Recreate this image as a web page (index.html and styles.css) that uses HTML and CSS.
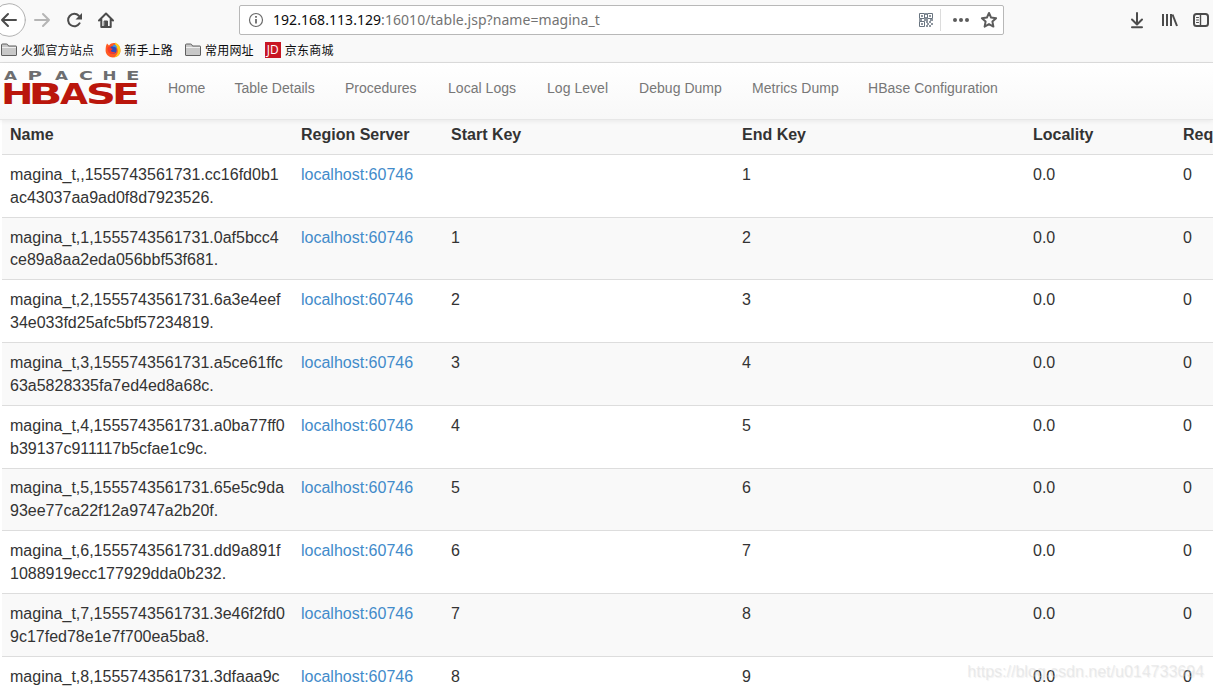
FILE: index.html
```html
<!DOCTYPE html>
<html lang="zh-CN">
<head>
  <meta charset="utf-8">
  <title>Table: magina_t</title>
  <link rel="stylesheet" href="styles.css">
</head>
<body>
  <div class="browser">
    <div class="toolbar">
      <div class="nav-buttons">
        <svg width="120" height="40" viewBox="0 0 120 40" fill="none" stroke="#4c4c4c" stroke-width="2" stroke-linecap="round" stroke-linejoin="round">
          <circle cx="9" cy="20" r="16.3" fill="#fff" stroke="#b1b1b1" stroke-width="1"/>
          <path d="M16 20H2M8 14l-6 6 6 6"/>
          <path d="M35 20h14M43 14l6 6-6 6" stroke="#b5b5b5"/>
          <path d="M79.6 23.3a6.2 6.2 0 1 1-.8-7.5"/>
          <path d="M82 13v6.5h-6.5z" fill="#4c4c4c" stroke="none"/>
          <path d="M99 20.5l7-7 7 7M101.3 19.5v7.5h9.4v-7.5"/>
          <path d="M104.5 21h3v5h-3z" fill="#4c4c4c" stroke-width="1"/>
        </svg>
      </div>
      <div class="urlbar">
        <svg class="info" width="16" height="16" viewBox="0 0 16 16" fill="none" stroke="#6b6b6b">
          <circle cx="8" cy="8" r="6.5" stroke-width="1.2"/>
          <path d="M8 7v4.5M8 4v1.8" stroke-width="1.8"/>
        </svg>
        <div class="url"><span class="host">192.168.113.129</span>:16010/table.jsp?name=magina_t</div>
        <svg class="qr" width="14" height="14" viewBox="0 0 14 14" fill="none" stroke="#68737f">
          <path d="M.5.5h5v5h-5zM8.500.5h5v5h-5zM.5 8.500h5v5h-5z"/>
          <path d="M2 3h2M10 3h2M2 11h2M7 0v2M7 4v2M0 7h3M5 7h4M11 7h3M7 9h2M10 9h2M8 11h2M12 11h2M7 13h2M10 13h2" stroke-width="1.600"/>
        </svg>
        <span class="divider"></span>
        <svg class="dots" width="18" height="6" viewBox="0 0 18 6" fill="#5c5c5c">
          <circle cx="3" cy="3" r="2"/><circle cx="9" cy="3" r="2"/><circle cx="15" cy="3" r="2"/>
        </svg>
        <svg class="star" width="18" height="18" viewBox="0 0 18 18" fill="none" stroke="#5c5c5c" stroke-width="2" stroke-linejoin="round">
          <path d="M9 2l2.100 4.600 5 .6-3.700 3.400 1 5L9 13.100l-4.400 2.500 1-5L1.900 7.200l5-.6z"/>
        </svg>
      </div>
      <div class="tools">
        <svg width="84" height="20" viewBox="0 0 84 20" fill="none" stroke="#4c4c4c" stroke-width="2" stroke-linecap="round" stroke-linejoin="round">
          <path d="M8 3v11M3 9.500l5 5 5-5M3 17.300h10"/>
          <path d="M34 4v12M38 4v12M42 4v12" stroke-linecap="butt"/>
          <path d="M43.500 4.500L48 16" stroke-linecap="butt"/>
          <rect x="65" y="4" width="14" height="12" rx="2.500"/>
          <path d="M71.500 4v12" stroke-width="1.4"/>
          <path d="M67.500 7.500h2M67.500 10h2M67.500 12.500h2" stroke-width="1"/>
        </svg>
      </div>
    </div>
    <div class="bookmarks">
      <div class="bookmark">
        <svg width="18" height="16" viewBox="0 0 18 16" fill="#c8c8c8" stroke="#606060"><path d="M1.500 13V3q0-1 1-1h4q1 0 1.500 1l.5 1H16q.5 0 .5.500V13q0 .5-.5.500H2q-.5 0-.5-.5z"/><path d="M2 5.500h14" stroke="#eee"/></svg>
        <span>火狐官方站点</span>
      </div>
      <div class="bookmark">
        <svg width="16" height="16" viewBox="0 0 16 16">
          <path d="M1 4l1-2.500L4 3.500C6 1 9 .5 10.500 1.500c3 1 5 4 4.900 7.300C15.300 13 12 15.500 8 15.500S.6 12.500.6 8.500C.6 7 .7 5.500 1 4z" fill="#ff5a22"/>
          <path d="M10 .5c4 1.500 5.600 4.500 5.500 8 0 4-3 6.500-6.500 7 3-2 4.500-5 3.500-8.500-.4-2-2.500-3-2.500-6.500z" fill="#ffc81a"/>
          <circle cx="7.800" cy="8" r="3.800" fill="#2f4bbd"/>
          <path d="M9 2.500c2 .5 3 2 3 4-1-1.200-2.500-2-4.500-2z" fill="#2a9df0"/>
          <path d="M2.500 6c1-1.500 2.500-2 3.500-1.800L5.500 6l2.300 1-2 1.400c.7 1.600 2.800 2 4.700 1-.8 2-3 3-5 2.300C3.500 11 2.300 8.500 2.500 6z" fill="#f83a2a"/>
        </svg>
        <span>新手上路</span>
      </div>
      <div class="bookmark">
        <svg width="18" height="16" viewBox="0 0 18 16" fill="#c8c8c8" stroke="#606060"><path d="M1.500 13V3q0-1 1-1h4q1 0 1.500 1l.5 1H16q.5 0 .5.500V13q0 .5-.5.500H2q-.5 0-.5-.5z"/><path d="M2 5.500h14" stroke="#eee"/></svg>
        <span>常用网址</span>
      </div>
      <div class="bookmark">
        <span class="jd">JD</span>
        <span>京东商城</span>
      </div>
    </div>
  </div>

  <div class="navbar">
    <svg class="logo" width="140" height="44" viewBox="0 -6 140 44">
      <g class="logo-small">
        <text x="0" y="11" textLength="13" lengthAdjust="spacingAndGlyphs">A</text>
        <text x="23.500" y="11" textLength="14.500" lengthAdjust="spacingAndGlyphs">P</text>
        <text x="51" y="11" textLength="13" lengthAdjust="spacingAndGlyphs">A</text>
        <text x="75" y="11" textLength="14" lengthAdjust="spacingAndGlyphs">C</text>
        <text x="98.500" y="11" textLength="14" lengthAdjust="spacingAndGlyphs">H</text>
        <text x="122" y="11" textLength="13.500" lengthAdjust="spacingAndGlyphs">E</text>
      </g>
      <g class="logo-big">
        <text x="-3" y="35" textLength="32.500" lengthAdjust="spacingAndGlyphs">H</text>
        <text x="24.500" y="35" textLength="34" lengthAdjust="spacingAndGlyphs">B</text>
        <text x="56" y="35" textLength="28" lengthAdjust="spacingAndGlyphs">A</text>
        <text x="82" y="35" textLength="30" lengthAdjust="spacingAndGlyphs">S</text>
        <text x="108" y="35" textLength="28" lengthAdjust="spacingAndGlyphs">E</text>
      </g>
    </svg>
    <ul class="menu">
      <li><a href="#">Home</a></li>
      <li><a href="#">Table Details</a></li>
      <li><a href="#">Procedures</a></li>
      <li><a href="#">Local Logs</a></li>
      <li><a href="#">Log Level</a></li>
      <li><a href="#">Debug Dump</a></li>
      <li><a href="#">Metrics Dump</a></li>
      <li><a href="#">HBase Configuration</a></li>
    </ul>
  </div>

  <div class="content">
    <div class="row head">
      <div>Name</div><div>Region Server</div><div>Start Key</div><div>End Key</div><div>Locality</div><div>Requests</div>
    </div>
    <div class="row">
      <div>magina_t,,1555743561731.cc16fd0b1<br>ac43037aa9ad0f8d7923526.</div><div><a href="#">localhost:60746</a></div><div></div><div>1</div><div>0.0</div><div>0</div>
    </div>
    <div class="row">
      <div>magina_t,1,1555743561731.0af5bcc4<br>ce89a8aa2eda056bbf53f681.</div><div><a href="#">localhost:60746</a></div><div>1</div><div>2</div><div>0.0</div><div>0</div>
    </div>
    <div class="row">
      <div>magina_t,2,1555743561731.6a3e4eef<br>34e033fd25afc5bf57234819.</div><div><a href="#">localhost:60746</a></div><div>2</div><div>3</div><div>0.0</div><div>0</div>
    </div>
    <div class="row">
      <div>magina_t,3,1555743561731.a5ce61ffc<br>63a5828335fa7ed4ed8a68c.</div><div><a href="#">localhost:60746</a></div><div>3</div><div>4</div><div>0.0</div><div>0</div>
    </div>
    <div class="row">
      <div>magina_t,4,1555743561731.a0ba77ff0<br>b39137c911117b5cfae1c9c.</div><div><a href="#">localhost:60746</a></div><div>4</div><div>5</div><div>0.0</div><div>0</div>
    </div>
    <div class="row">
      <div>magina_t,5,1555743561731.65e5c9da<br>93ee77ca22f12a9747a2b20f.</div><div><a href="#">localhost:60746</a></div><div>5</div><div>6</div><div>0.0</div><div>0</div>
    </div>
    <div class="row">
      <div>magina_t,6,1555743561731.dd9a891f<br>1088919ecc177929dda0b232.</div><div><a href="#">localhost:60746</a></div><div>6</div><div>7</div><div>0.0</div><div>0</div>
    </div>
    <div class="row">
      <div>magina_t,7,1555743561731.3e46f2fd0<br>9c17fed78e1e7f700ea5ba8.</div><div><a href="#">localhost:60746</a></div><div>7</div><div>8</div><div>0.0</div><div>0</div>
    </div>
    <div class="row">
      <div>magina_t,8,1555743561731.3dfaaa9c</div><div><a href="#">localhost:60746</a></div><div>8</div><div>9</div><div>0.0</div><div>0</div>
    </div>
  </div>
  <div class="watermark">https://blog.csdn.net/u014733694</div>
</body>
</html>
```

FILE: styles.css
```css
* {
  box-sizing: border-box;
}

body {
  margin: 0;
  width: 1213px;
  height: 690px;
  overflow: hidden;
  position: relative;
  background: #fff;
  color: #333;
  font-family: "Liberation Sans", Arial, sans-serif;
  font-size: 16px;
  line-height: 22.857px;
}

svg {
  display: block;
  flex: none;
}

a {
  color: #428bca;
  text-decoration: none;
}

/* browser chrome */
.browser {
  height: 63px;
  background: #f9f9f9;
  border-bottom: 1px solid #dedede;
}

.toolbar {
  display: flex;
  align-items: center;
  height: 40px;
}

.nav-buttons {
  width: 239px;
}

.urlbar {
  display: flex;
  align-items: center;
  width: 765px;
  height: 30px;
  padding: 0 5px 0 8px;
  border: 1px solid #b8b8b8;
  border-radius: 2px;
  background: #fff;
}

.url {
  flex: 1;
  margin-left: 9px;
  color: #737373;
  font-family: "Noto Sans", sans-serif;
  font-size: 14px;
  letter-spacing: 0.05px;
  white-space: nowrap;
}

.host {
  color: #0c0c0d;
}

.divider {
  width: 1px;
  height: 22px;
  margin: 0 11px 0 7px;
  background: #dcdcdc;
}

.star {
  margin-left: 10px;
}

.tools {
  margin-left: 125px;
}

.bookmarks {
  display: flex;
  height: 20px;
  align-items: center;
  color: #0c0c0d;
  font-family: "Noto Sans CJK SC", sans-serif;
  font-size: 12px;
  letter-spacing: 0.2px;
  line-height: 20px;
}

.bookmark {
  display: flex;
  align-items: center;
  gap: 3px;
  margin-right: 11px;
}

.jd {
  width: 16px;
  height: 16px;
  margin-right: 1px;
  background: #c81623;
  color: #fff;
  font-family: "Open Sans", sans-serif;
  font-size: 12px;
  line-height: 16px;
  text-align: center;
}

/* hbase navbar */
.navbar {
  display: flex;
  position: relative;
  height: 57px;
  padding-left: 4px;
  background: linear-gradient(#fff, #f8f8f8);
  border-bottom: 1px solid #e7e7e7;
  box-shadow: 0 1px 5px rgba(0, 0, 0, 0.075);
}

.logo {
  overflow: visible;
}

.logo-small {
  fill: #6d6e70;
  font: bold 12.5px "DejaVu Sans", sans-serif;
}

.logo-big {
  fill: #ba160c;
  font: bold 28.8px "DejaVu Sans", sans-serif;
}

.menu {
  display: grid;
  grid-template-columns: 66.5px 110.5px 103px 99px 92px 113px 116px 170px;
  margin: 0 0 0 9px;
  padding: 0;
  list-style: none;
  font-size: 14px;
  line-height: 20px;
}

.menu a {
  display: block;
  padding: 15px 0 15px 15px;
  color: #777;
}

.menu li:nth-child(n+4) a {
  letter-spacing: 0.04px;
}

/* regions table */
.content {
  margin-left: 2px;
  overflow: hidden;
}

.row {
  display: grid;
  grid-template-columns: 291px 150px 291px 291px 150px 1fr;
  height: 62.714px;
  border-top: 1px solid #ddd;
}

.row > div {
  padding: 8.9px 8px 0;
  min-width: 0;
}

.row:nth-child(odd) {
  background: #f9f9f9;
}

.head {
  height: 34px;
  border-top: 0;
  font-weight: bold;
}

.head > div {
  padding-top: 4px;
}

.watermark {
  position: absolute;
  right: 9px;
  bottom: 6px;
  color: rgba(210, 210, 210, 0.4);
  font-size: 16px;
  text-shadow: 1px 1px 1px rgba(160, 160, 160, 0.15);
}
```
